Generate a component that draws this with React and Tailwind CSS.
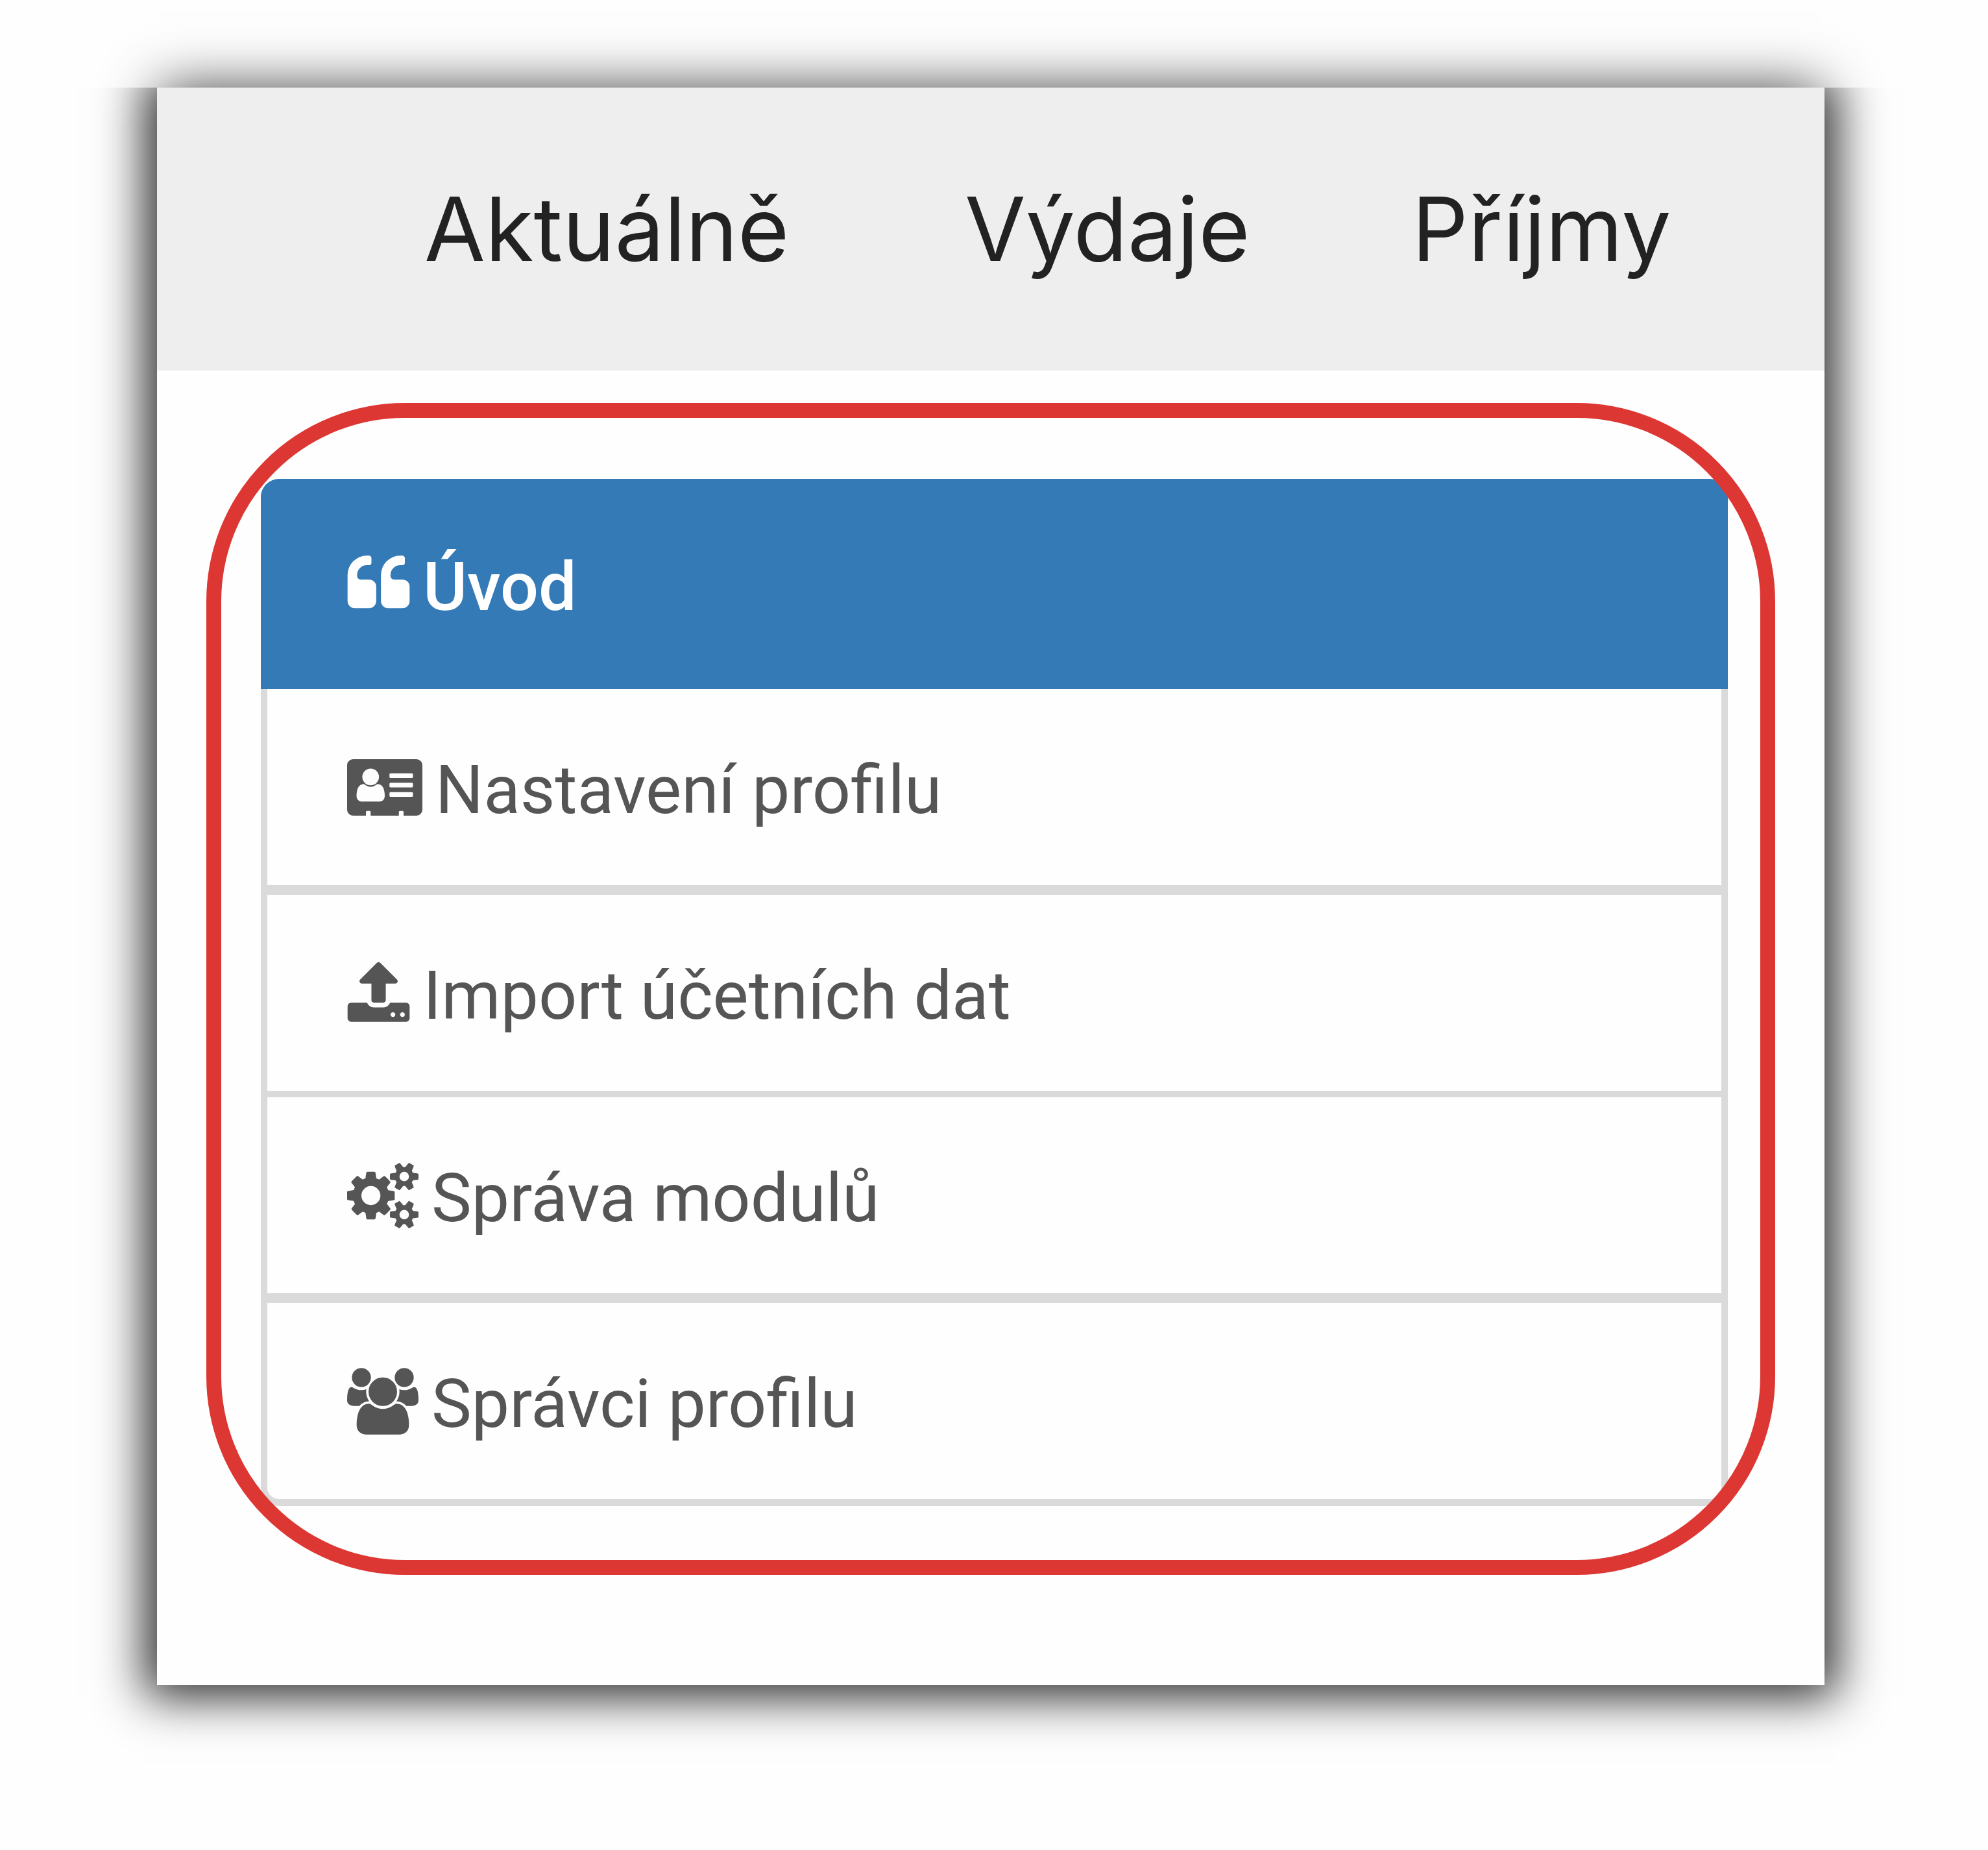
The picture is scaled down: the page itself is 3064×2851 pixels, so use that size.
import React from "react";

const ICONS = {
  quote: {
    viewBox: "64 0 1664 1792",
    size: "w-[97px]",
    d: "M832 960v384q0 80-56 136t-136 56h-384q-80 0-136-56t-56-136v-704q0-104 40.5-198.5t109.5-163.5 163.5-109.5 198.5-40.5h64q26 0 45 19t19 45v128q0 26-19 45t-45 19h-64q-106 0-181 75t-75 181v32q0 40 28 68t68 28h224q80 0 136 56t56 136zm896 0v384q0 80-56 136t-136 56h-384q-80 0-136-56t-56-136v-704q0-104 40.5-198.5t109.5-163.5 163.5-109.5 198.5-40.5h64q26 0 45 19t19 45v128q0 26-19 45t-45 19h-64q-106 0-181 75t-75 181v32q0 40 28 68t68 28h224q80 0 136 56t56 136z",
  },
  card: {
    viewBox: "0 0 2048 1792",
    size: "w-[116px]",
    d: "M1024 1131q0-64-9-117.5t-29.5-103-60.5-78-97-28.5q-6 4-30 18t-37.5 21.5-35.5 17.5-43 14.5-42 4.5-42-4.5-43-14.5-35.5-17.5-37.5-21.5-30-18q-57 0-97 28.5t-60.5 78-29.5 103-9 117.5 37 106.5 91 42.5h512q54 0 91-42.5t37-106.5zm-157-520q0-94-66.5-160.5t-160.5-66.5-160.5 66.5-66.5 160.5 66.5 160.5 160.5 66.5 160.5-66.5 66.5-160.5zm925 509v-64q0-14-9-23t-23-9h-576q-14 0-23 9t-9 23v64q0 14 9 23t23 9h576q14 0 23-9t9-23zm0-260v-56q0-15-10.5-25.5t-25.5-10.5h-568q-15 0-25.5 10.5t-10.5 25.5v56q0 15 10.5 25.5t25.5 10.5h568q15 0 25.5-10.5t10.5-25.5zm0-252v-64q0-14-9-23t-23-9h-576q-14 0-23 9t-9 23v64q0 14 9 23t23 9h576q14 0 23-9t9-23zm256-320v1216q0 66-47 113t-113 47h-352v-96q0-14-9-23t-23-9h-64q-14 0-23 9t-9 23v96h-768v-96q0-14-9-23t-23-9h-64q-14 0-23 9t-9 23v96h-352q-66 0-113-47t-47-113v-1216q0-66 47-113t113-47h1728q66 0 113 47t47 113z",
  },
  upload: {
    viewBox: "64 0 1664 1792",
    size: "w-[97px]",
    d: "M1344 1472q0-26-19-45t-45-19-45 19-19 45 19 45 45 19 45-19 19-45zm256 0q0-26-19-45t-45-19-45 19-19 45 19 45 45 19 45-19 19-45zm128-224v320q0 40-28 68t-68 28h-1472q-40 0-68-28t-28-68v-320q0-40 28-68t68-28h427q21 56 70.5 92t110.5 36h256q61 0 110.5-36t70.5-92h427q40 0 68 28t28 68zm-325-648q-17 40-59 40h-256v448q0 26-19 45t-45 19h-256q-26 0-45-19t-19-45v-448h-256q-42 0-59-40-17-39 14-69l448-448q18-19 45-19t45 19l448 448q31 30 14 69z",
  },
  cogs: {
    viewBox: "-64 0 1920 1792",
    size: "w-[110px]",
    d: "M832 896q0-106-75-181t-181-75-181 75-75 181 75 181 181 75 181-75 75-181zm768 512q0-52-38-90t-90-38-90 38-38 90q0 53 37.5 90.5t90.5 37.5 90.5-37.5 37.5-90.5zm0-1024q0-52-38-90t-90-38-90 38-38 90q0 53 37.5 90.5t90.5 37.5 90.5-37.5 37.5-90.5zm-384 421v185q0 10-7 19.5t-16 10.5l-155 24q-11 35-32 76 34 48 90 115 7 11 7 20 0 12-7 19-23 30-82.5 89.5t-78.5 59.5q-11 0-21-7l-115-90q-37 19-77 31-11 108-23 155-7 24-30 24h-186q-11 0-20-7.5t-10-17.5l-23-153q-34-10-75-31l-118 89q-7 7-20 7-11 0-21-8-144-133-144-160 0-9 7-19 10-14 41-53t47-61q-23-44-35-82l-152-24q-10-1-17-9.5t-7-19.5v-185q0-10 7-19.5t16-10.5l155-24q11-35 32-76-34-48-90-115-7-11-7-20 0-12 7-20 22-30 82-89t79-59q11 0 21 7l115 90q34-18 77-32 11-108 23-154 7-24 30-24h186q11 0 20 7.5t10 17.5l23 153q34 10 75 31l118-89q8-7 20-7 11 0 21 8 144 133 144 160 0 8-7 19-12 16-42 54t-45 60q23 48 34 82l152 23q10 2 17 10.5t7 19.5zm640 533v140q0 16-149 31-12 27-30 52 51 113 51 138 0 4-4 7-122 71-124 71-8 0-46-47t-52-68q-20 2-30 2t-30-2q-14 21-52 68t-46 47q-2 0-124-71-4-3-4-7 0-25 51-138-18-25-30-52-149-15-149-31v-140q0-16 149-31 13-29 30-52-51-113-51-138 0-4 4-7 4-2 35-20t59-34 30-16q8 0 46 46.5t52 67.5q20-2 30-2t30 2q51-71 92-112l6-2q4 0 124 70 4 3 4 7 0 25-51 138 17 23 30 52 149 15 149 31zm0-1024v140q0 16-149 31-12 27-30 52 51 113 51 138 0 4-4 7-122 71-124 71-8 0-46-47t-52-68q-20 2-30 2t-30-2q-14 21-52 68t-46 47q-2 0-124-71-4-3-4-7 0-25 51-138-18-25-30-52-149-15-149-31v-140q0-16 149-31 13-29 30-52-51-113-51-138 0-4 4-7 4-2 35-20t59-34 30-16q8 0 46 46.5t52 67.5q20-2 30-2t30 2q51-71 92-112l6-2q4 0 124 70 4 3 4 7 0 25-51 138 17 23 30 52 149 15 149 31z",
  },
  users: {
    viewBox: "64 0 1920 1792",
    size: "w-[110px]",
    d: "M657 896q-162 5-265 128h-134q-82 0-138-40.5t-56-118.5q0-353 124-353 6 0 43.5 21t97.5 42.5 119 21.5q67 0 133-23-5 37-5 66 0 139 81 256zm1071 637q0 120-73 189.5t-194 69.5h-874q-121 0-194-69.5t-73-189.5q0-53 3.5-103.5t14-109 26.5-108.5 43-97.5 62-81 85.5-53.5 111.5-20q10 0 43 21.5t73 48 107 48 135 21.5 135-21.5 107-48 73-48 43-21.5q61 0 111.5 20t85.5 53.5 62 81 43 97.5 26.5 108.5 14 109 3.5 103.5zm-1024-1277q0 106-75 181t-181 75-181-75-75-181 75-181 181-75 181 75 75 181zm704 384q0 159-112.5 271.5t-271.5 112.5-271.5-112.5-112.5-271.5 112.5-271.5 271.5-112.5 271.5 112.5 112.5 271.5zm576 225q0 78-56 118.5t-138 40.5h-134q-103-123-265-128 81-117 81-256 0-29-5-66 66 23 133 23 59 0 119-21.5t97.5-42.5 43.5-21q124 0 124 353zm-128-609q0 106-75 181t-181 75-181-75-75-181 75-181 181-75 181 75 75 181z",
  },
};

function Icon({ name }) {
  const icon = ICONS[name];
  return (
    <svg viewBox={icon.viewBox} className={`h-[103px] shrink-0 ${icon.size}`} fill="currentColor" aria-hidden="true">
      <path d={icon.d} />
    </svg>
  );
}

const TABS = ["Aktuálně", "Výdaje", "Příjmy"];

const ITEMS = [
  { icon: "card", label: "Nastavení profilu", border: "border-b-[15px]" },
  { icon: "upload", label: "Import účetních dat", border: "border-b-[10px]" },
  { icon: "cogs", label: "Správa modulů", border: "border-b-[15px]" },
  { icon: "users", label: "Správci profilu", border: "border-b-[11px]" },
];

export default function App() {
  return (
    <div className="min-h-screen bg-[#fefefe] pt-[135px] pr-[252px] pb-[254px] pl-[242px] font-['Roboto',sans-serif]">
      <div className="relative">
        {/* Soft shadow: lighter above the card, darker around the other three sides */}
        <div className="absolute inset-0 shadow-[0_-2px_80px_-4px_rgba(0,0,0,0.76)] [clip-path:inset(-135px_-240px_100%_-240px)]" />
        <div className="absolute inset-0 shadow-[0_0_70px_18px_rgba(0,0,0,0.84)] [clip-path:inset(0_-240px_-250px_-240px)]" />

        <div className="relative bg-[#fefefe]">
          <nav className="grid h-[436px] grid-cols-[833fr_689fr_636fr] items-center bg-[#eeeeee] pl-[412px] font-['Inter',sans-serif] text-[136px] leading-none text-[#222222]">
            {TABS.map((tab) => (
              <a key={tab} href="#" className="justify-self-start whitespace-nowrap">
                {tab}
              </a>
            ))}
          </nav>

          <main className="px-[76px] pt-[50px] pb-[170px]">
            <div className="relative pt-[117px] pr-[73px] pb-[106px] pl-[84px]">
              <ul className="text-[104px] leading-none text-[#555555]">
                <li>
                  <a
                    href="#"
                    aria-current="page"
                    className="flex h-[324px] items-center gap-[20px] rounded-t-[28px] bg-[#337ab7] pl-[133px] font-medium text-white"
                  >
                    <Icon name="quote" />
                    <span className="pt-[10px]">Úvod</span>
                  </a>
                </li>
                {ITEMS.map((item) => (
                  <li
                    key={item.icon}
                    className={`border-x-[10px] border-[#dadada] last:rounded-b-[28px] ${item.border}`}
                  >
                    <a href="#" className="flex h-[302px] items-center gap-[20px] pl-[123px]">
                      <Icon name={item.icon} />
                      <span className="pt-[10px]">{item.label}</span>
                    </a>
                  </li>
                ))}
              </ul>
              {/* Highlight frame drawn over the list */}
              <div className="pointer-events-none absolute inset-0 rounded-[306px] border-[23px] border-[#dd3733]" />
            </div>
          </main>
        </div>
      </div>
    </div>
  );
}
